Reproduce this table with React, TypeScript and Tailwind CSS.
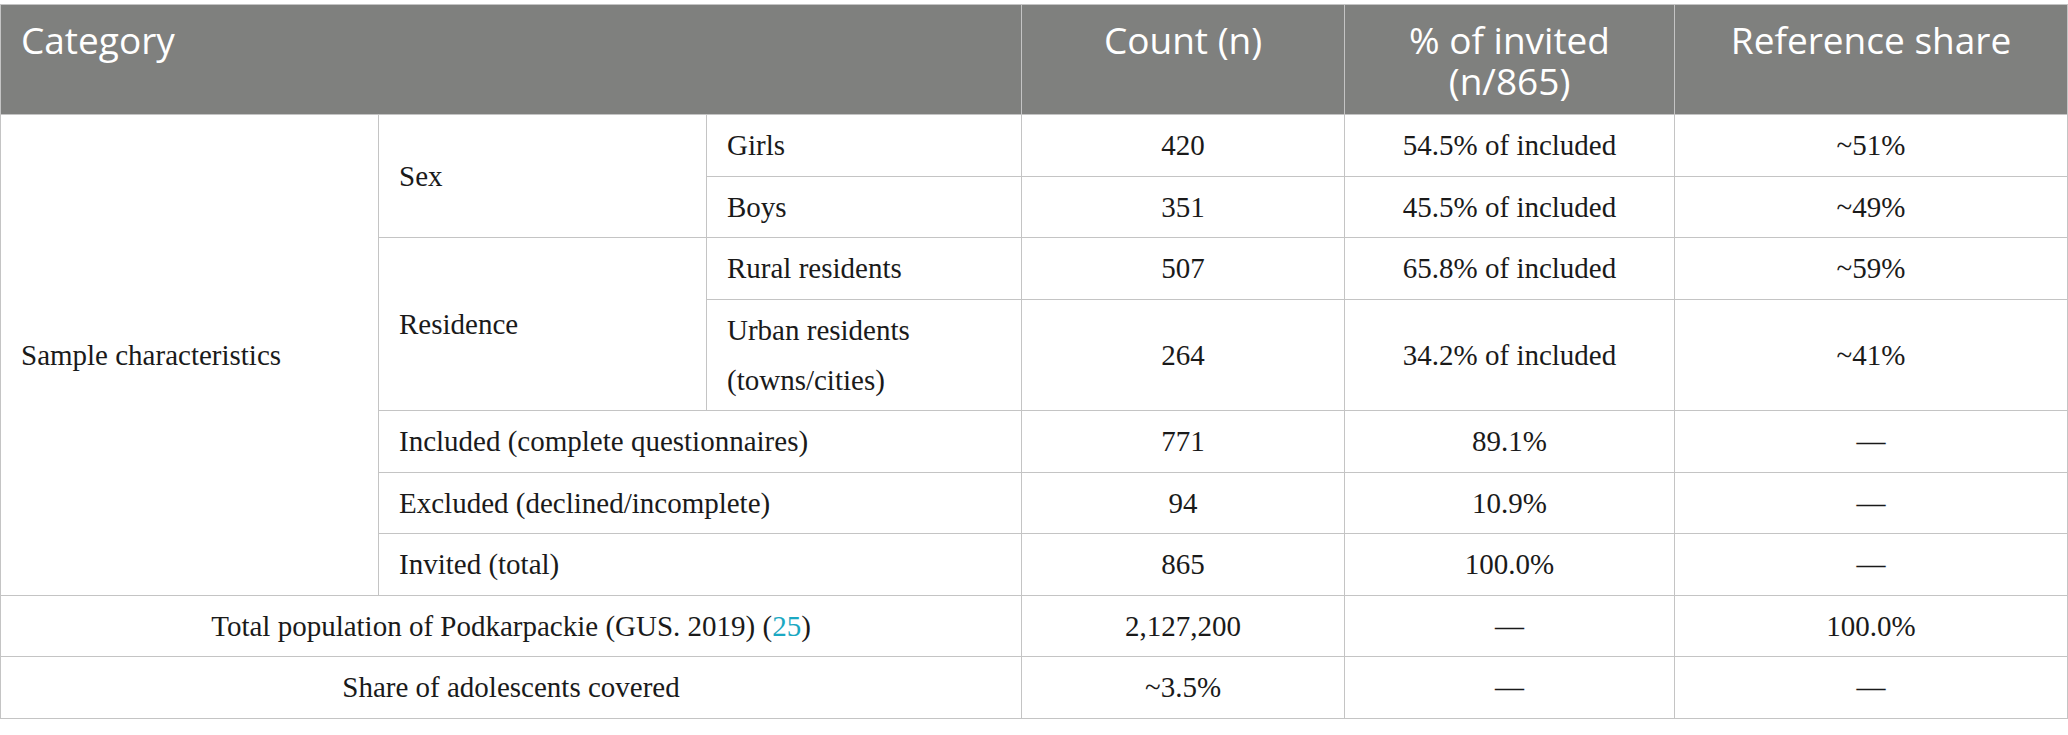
import React from "react";

const serif = "font-['Liberation_Serif','Times_New_Roman',serif]";
const td = `border border-[#c4c4c4] px-[20px] py-[5.25px] leading-[50px] text-[29px] text-[#1a1a1a] align-middle ${serif}`;
const tdc = `${td} text-center`;
const th = "border border-[#c4c4c4] px-[20px] pt-[14px] align-top text-white text-[37px] leading-[41px] font-normal font-['Open_Sans','Noto_Sans',sans-serif] h-[110px]";

export default function App() {
  return (
    <div className="w-[2068px] bg-white pt-[4px]">
      <table className="w-[2067px] table-fixed border-collapse border border-[#c4c4c4]">
        <colgroup>
          <col className="w-[378px]" />
          <col className="w-[328px]" />
          <col className="w-[315px]" />
          <col className="w-[323px]" />
          <col className="w-[330px]" />
          <col className="w-[393px]" />
        </colgroup>
        <thead>
          <tr className="bg-[#7f807e]">
            <th colSpan={3} className={`${th} text-left`}>Category</th>
            <th className={`${th} text-center`}>Count (n)</th>
            <th className={`${th} text-center`}>
              % of invited
              <br />
              (n/865)
            </th>
            <th className={`${th} text-center`}>Reference share</th>
          </tr>
        </thead>
        <tbody>
          <tr>
            <td rowSpan={7} className={td}>Sample characteristics</td>
            <td rowSpan={2} className={td}>Sex</td>
            <td className={td}>Girls</td>
            <td className={tdc}>420</td>
            <td className={tdc}>54.5% of included</td>
            <td className={tdc}>~51%</td>
          </tr>
          <tr>
            <td className={td}>Boys</td>
            <td className={tdc}>351</td>
            <td className={tdc}>45.5% of included</td>
            <td className={tdc}>~49%</td>
          </tr>
          <tr>
            <td rowSpan={2} className={td}>Residence</td>
            <td className={td}>Rural residents</td>
            <td className={tdc}>507</td>
            <td className={tdc}>65.8% of included</td>
            <td className={tdc}>~59%</td>
          </tr>
          <tr>
            <td className={td}>
              Urban residents
              <br />
              (towns/cities)
            </td>
            <td className={tdc}>264</td>
            <td className={tdc}>34.2% of included</td>
            <td className={tdc}>~41%</td>
          </tr>
          <tr>
            <td colSpan={2} className={td}>Included (complete questionnaires)</td>
            <td className={tdc}>771</td>
            <td className={tdc}>89.1%</td>
            <td className={tdc}>—</td>
          </tr>
          <tr>
            <td colSpan={2} className={td}>Excluded (declined/incomplete)</td>
            <td className={tdc}>94</td>
            <td className={tdc}>10.9%</td>
            <td className={tdc}>—</td>
          </tr>
          <tr>
            <td colSpan={2} className={td}>Invited (total)</td>
            <td className={tdc}>865</td>
            <td className={tdc}>100.0%</td>
            <td className={tdc}>—</td>
          </tr>
          <tr>
            <td colSpan={3} className={tdc}>
              Total population of Podkarpackie (GUS. 2019) (
              <span className="text-[#1ba8c2]">25</span>)
            </td>
            <td className={tdc}>2,127,200</td>
            <td className={tdc}>—</td>
            <td className={tdc}>100.0%</td>
          </tr>
          <tr>
            <td colSpan={3} className={tdc}>Share of adolescents covered</td>
            <td className={tdc}>~3.5%</td>
            <td className={tdc}>—</td>
            <td className={tdc}>—</td>
          </tr>
        </tbody>
      </table>
    </div>
  );
}
